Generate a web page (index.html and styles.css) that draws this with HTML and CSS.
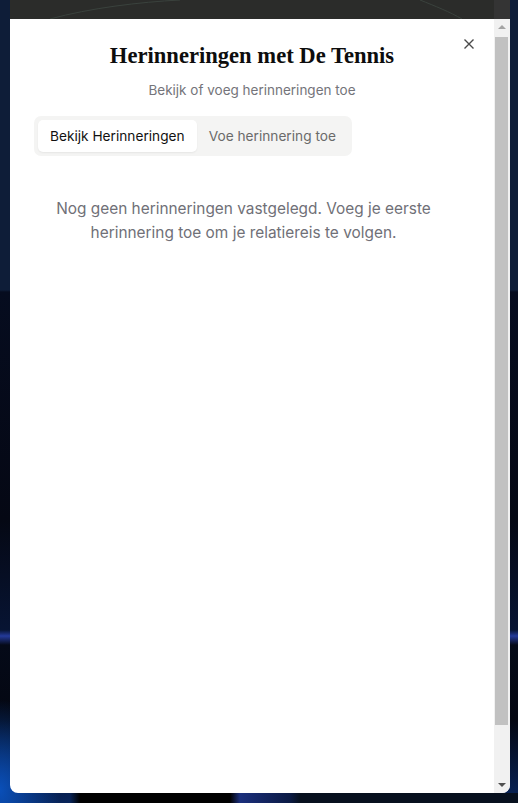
FILE: index.html
```html
<!DOCTYPE html>
<html lang="nl">
<head>
<meta charset="utf-8">
<title>Herinneringen met De Tennis</title>
<link rel="stylesheet" href="styles.css">
</head>
<body>
<div class="page">
  <div class="topstrip">
    <svg class="arcs" width="484" height="19" viewBox="0 0 484 19" aria-hidden="true">
      <path d="M40 19 C 80 8, 130 2, 170 0" fill="none" stroke="#3a423d" stroke-width="1"/>
      <path d="M410 0 C 425 6, 440 12, 452 19" fill="none" stroke="#3a423d" stroke-width="1"/>
    </svg>
    <div class="strip-right"></div>
  </div>
  <div class="modal">
    <div class="content">
      <button class="close" aria-label="Sluiten">
        <svg width="10" height="10" viewBox="0 0 10 10"><path d="M0.5 0.5 L9.5 9.5 M9.5 0.5 L0.5 9.5" stroke="#4a4a4a" stroke-width="1.4" fill="none"/></svg>
      </button>
      <h1 class="title">Herinneringen met De Tennis</h1>
      <p class="subtitle">Bekijk of voeg herinneringen toe</p>
      <div class="tabs">
        <div class="tab active">Bekijk Herinneringen</div>
        <div class="tab">Voe herinnering toe</div>
      </div>
      <p class="empty">Nog geen herinneringen vastgelegd. Voeg je eerste herinnering toe om je relatiereis te volgen.</p>
    </div>
    <div class="scrollbar">
      <div class="sb-btn up"><span class="tri-up"></span></div>
      <div class="sb-thumb"></div>
      <div class="sb-rest"></div>
      <div class="sb-btn down"><span class="tri-down"></span></div>
    </div>
  </div>
</div>
</body>
</html>
```
FILE: styles.css
```css
html, body {
  margin: 0;
  padding: 0;
}
body {
  width: 518px;
  height: 803px;
  overflow: hidden;
  background:
    radial-gradient(ellipse 60px 90px at 0px 790px, #0a4fb8 0%, rgba(10,79,184,0) 100%),
    linear-gradient(180deg, #0e1d38 0px, #0e1d38 290px, #060c1f 292px, #050814 520px, #071433 630px, #243a9a 636px, #050a18 645px, #040712 720px, #08245a 803px);
  font-family: "Inter", "Liberation Sans", sans-serif;
}
.page {
  display: flex;
  flex-direction: column;
  padding: 0 8px 10px 10px;
  height: 803px;
  box-sizing: border-box;
  background:
    linear-gradient(90deg, rgba(0,0,0,0) 0, rgba(0,0,0,0) 70px, #000 80px, #000 230px, #1b2f7c 240px, #0b1a44 290px, #07101e 300px) bottom / 100% 10px no-repeat;
}
.topstrip {
  height: 19px;
  flex: none;
  display: flex;
  background: #2b2c2a;
}
.arcs {
  display: block;
  flex: 1;
}
.strip-right {
  width: 16px;
  background: #343434;
}
.modal {
  flex: 1;
  display: flex;
  background: #ffffff;
  border-radius: 0 0 8px 8px;
  overflow: hidden;
}
.content {
  position: relative;
  flex: 1;
  padding: 22px 24px 24px;
  text-align: center;
}
.close {
  position: absolute;
  top: 20px;
  right: 20px;
  width: 10px;
  height: 10px;
  padding: 0;
  border: 0;
  background: none;
  display: flex;
}
.title {
  margin: 0;
  font-family: "Liberation Serif", "DejaVu Serif", serif;
  font-weight: 700;
  font-size: 22.6px;
  line-height: 30px;
  color: #0d0d0d;
}
.subtitle {
  margin: 9px 0 0;
  font-size: 13.5px;
  line-height: 20px;
  color: #74747a;
}
.tabs {
  margin-top: 16px;
  display: inline-flex;
  float: left;
  padding: 4px;
  border-radius: 7px;
  background: #f4f4f3;
}
.tab {
  height: 32px;
  line-height: 32px;
  padding: 0 12px;
  font-size: 13.7px;
  color: #6a6a6a;
  border-radius: 5px;
  white-space: nowrap;
}
.tab.active {
  background: #ffffff;
  color: #111111;
  box-shadow: 0 1px 2px rgba(0,0,0,0.06);
}
.empty {
  clear: both;
  margin: 0;
  padding: 41px 17px 0 0;
  font-size: 15.4px;
  line-height: 24px;
  color: #707077;
}
.scrollbar {
  width: 16px;
  flex: none;
  display: flex;
  flex-direction: column;
  background: #f1f1f1;
}
.sb-btn {
  height: 16px;
  display: flex;
  align-items: center;
  justify-content: center;
}
.tri-up {
  width: 0;
  height: 0;
  border-left: 4px solid transparent;
  border-right: 4px solid transparent;
  border-bottom: 4px solid #a3a3a3;
}
.tri-down {
  width: 0;
  height: 0;
  border-left: 4px solid transparent;
  border-right: 4px solid transparent;
  border-top: 4px solid #505050;
}
.sb-thumb {
  height: 688px;
  margin: 2px 2px 0 1px;
  background: #c1c1c1;
}
.sb-rest {
  flex: 1;
}
```
